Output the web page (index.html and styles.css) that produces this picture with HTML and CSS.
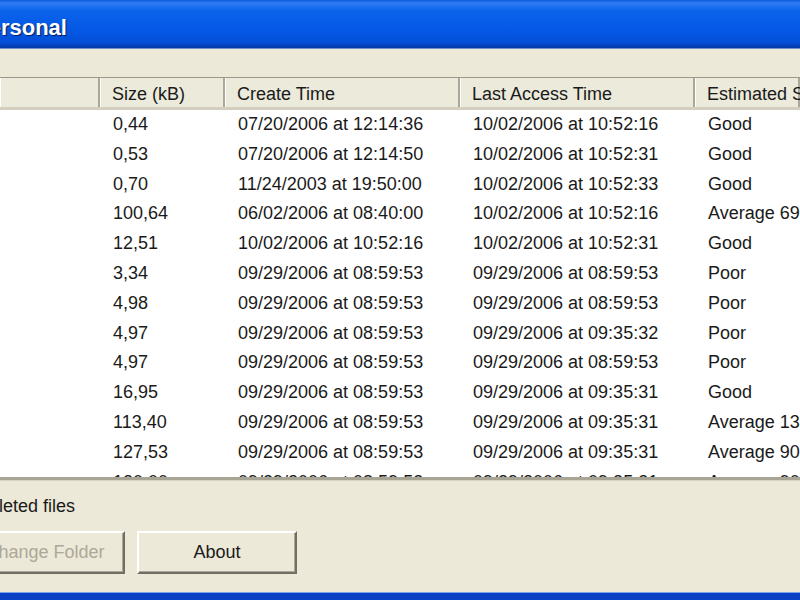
FILE: index.html
```html
<!DOCTYPE html>
<html lang="en">
  <head>
    <meta charset="UTF-8" />
    <title>Personal</title>
    <link rel="stylesheet" href="styles.css">
  </head>
  <body>
    <div class="window">
      <div class="titlebar">
        <span class="title">Personal</span>
      </div>
      <div class="toolbar"></div>

      <div class="listview">
        <table class="list">
          <colgroup>
            <col class="c-name" />
            <col class="c-size" />
            <col class="c-time" />
            <col class="c-time" />
            <col />
          </colgroup>
          <thead>
            <tr>
              <th></th>
              <th>Size (kB)</th>
              <th>Create Time</th>
              <th>Last Access Time</th>
              <th>Estimated Security</th>
            </tr>
          </thead>
          <tbody>
            <tr><td></td><td>0,44</td><td>07/20/2006 at 12:14:36</td><td>10/02/2006 at 10:52:16</td><td>Good</td></tr>
            <tr><td></td><td>0,53</td><td>07/20/2006 at 12:14:50</td><td>10/02/2006 at 10:52:31</td><td>Good</td></tr>
            <tr><td></td><td>0,70</td><td>11/24/2003 at 19:50:00</td><td>10/02/2006 at 10:52:33</td><td>Good</td></tr>
            <tr><td></td><td>100,64</td><td>06/02/2006 at 08:40:00</td><td>10/02/2006 at 10:52:16</td><td>Average 69%</td></tr>
            <tr><td></td><td>12,51</td><td>10/02/2006 at 10:52:16</td><td>10/02/2006 at 10:52:31</td><td>Good</td></tr>
            <tr><td></td><td>3,34</td><td>09/29/2006 at 08:59:53</td><td>09/29/2006 at 08:59:53</td><td>Poor</td></tr>
            <tr><td></td><td>4,98</td><td>09/29/2006 at 08:59:53</td><td>09/29/2006 at 08:59:53</td><td>Poor</td></tr>
            <tr><td></td><td>4,97</td><td>09/29/2006 at 08:59:53</td><td>09/29/2006 at 09:35:32</td><td>Poor</td></tr>
            <tr><td></td><td>4,97</td><td>09/29/2006 at 08:59:53</td><td>09/29/2006 at 08:59:53</td><td>Poor</td></tr>
            <tr><td></td><td>16,95</td><td>09/29/2006 at 08:59:53</td><td>09/29/2006 at 09:35:31</td><td>Good</td></tr>
            <tr><td></td><td>113,40</td><td>09/29/2006 at 08:59:53</td><td>09/29/2006 at 09:35:31</td><td>Average 13%</td></tr>
            <tr><td></td><td>127,53</td><td>09/29/2006 at 08:59:53</td><td>09/29/2006 at 09:35:31</td><td>Average 90%</td></tr>
            <tr><td></td><td>130,00</td><td>09/29/2006 at 08:59:53</td><td>09/29/2006 at 09:35:31</td><td>Average 90%</td></tr>
          </tbody>
        </table>
      </div>

      <div class="footer">
        <div class="option"><span class="option-text">Show deleted files</span></div>
        <div class="buttons">
          <button class="btn btn-folder" disabled>Change Folder</button>
          <button class="btn">About</button>
        </div>
      </div>
      <div class="frame-bottom"></div>
    </div>
  </body>
</html>
```

FILE: styles.css
```css
html,
body {
  margin: 0;
  padding: 0;
  width: 800px;
  height: 600px;
  overflow: hidden;
  background: #ece9d8;
}

.window {
  display: flex;
  flex-direction: column;
  width: 800px;
  height: 600px;
  overflow: hidden;
  font-family: "Liberation Sans", Arial, sans-serif;
  font-size: 18px;
  color: #1a1a1a;
}

/* title bar */
.titlebar {
  height: 48px;
  flex: none;
  display: flex;
  align-items: center;
  overflow: hidden;
  background: linear-gradient(
    #0a5cdc 0%,
    #2f7df5 6%,
    #0b63ea 22%,
    #0558e6 60%,
    #0450d8 88%,
    #0238a8 100%
  );
  border-bottom: 1px solid #6f8fc8;
}

.title {
  margin-left: -26px;
  padding-top: 8px;
  font-weight: bold;
  font-size: 22px;
  color: #fff;
  text-shadow: 1px 1px 1px #0a1c60;
  white-space: nowrap;
}

.toolbar {
  height: 28px;
  flex: none;
  background: #ece9d8;
}

/* list view */
.listview {
  height: 399px;
  flex: none;
  overflow: hidden;
  background: #fff;
  border-top: 1px solid #9a9889;
}

.list {
  width: 800px;
  table-layout: fixed;
  border-collapse: collapse;
  border-spacing: 0;
}

.list .c-name {
  width: 100px;
}

.list .c-size {
  width: 125px;
}

.list .c-time {
  width: 235px;
}

.list th {
  height: 25px;
  padding: 4px 12px 0 12px;
  text-align: left;
  font-weight: normal;
  white-space: nowrap;
  overflow: hidden;
  background: #ebeadb;
  border-bottom: 3px solid #d2cfbf;
  box-shadow: inset 1px 0 #fff, inset -2px 0 #aca899;
}

.list td {
  height: 29.8px;
  padding: 0 12px 0 13px;
  white-space: nowrap;
  overflow: hidden;
  line-height: 29.8px;
}

/* footer */
.footer {
  flex: 1;
  border-top: 3px solid #a8a595;
  box-shadow: inset 0 1px #d6d3c4;
  padding-top: 15px;
}

.option {
  height: 22px;
  line-height: 22px;
  white-space: nowrap;
  overflow: hidden;
}

.option-text {
  margin-left: -71px;
}

.buttons {
  display: flex;
  gap: 12px;
  margin-top: 14px;
  margin-left: -35px;
}

.btn {
  width: 160px;
  height: 43px;
  padding: 0;
  font-family: "Liberation Sans", Arial, sans-serif;
  font-size: 18px;
  color: #1a1a1a;
  background: #ece9d8;
  border: 2px solid;
  border-color: #fff #716f64 #716f64 #fff;
  box-shadow: inset -1px -1px #aca899;
  white-space: nowrap;
}

.btn:disabled {
  color: #aca899;
}

.frame-bottom {
  height: 7px;
  flex: none;
  background: #0a40c4;
  border-top: 1px solid #7aa3ee;
}
```
